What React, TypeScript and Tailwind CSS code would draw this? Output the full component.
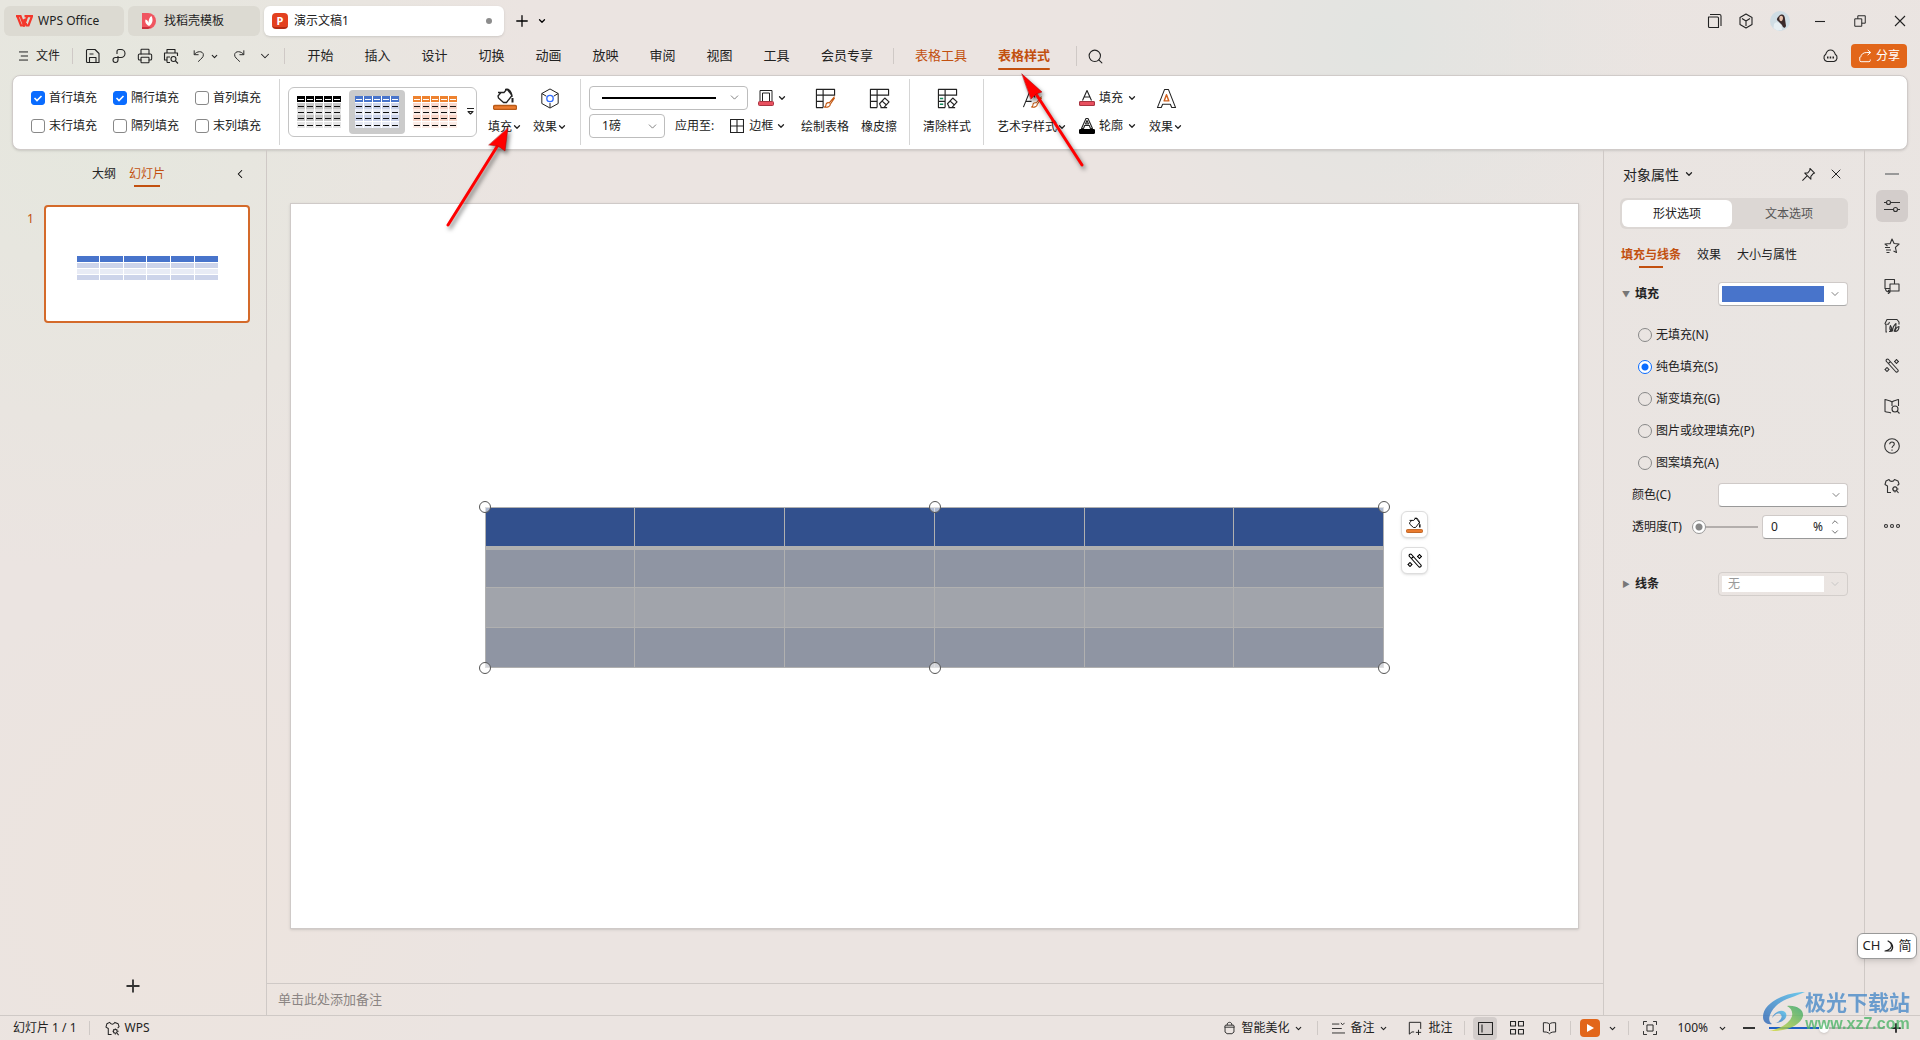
import React from "react";
import { ChevronDown, ChevronLeft, Plus, Printer, Search, X } from "lucide-react";

const font = "font-['Noto_Sans','Noto_Sans_CJK_SC',sans-serif]";

type IconProps = {
  d?: string;
  w?: number;
  h?: number;
  box?: string;
  sw?: number;
  className?: string;
  children?: React.ReactNode;
};

const Icon = ({
  d,
  w = 16,
  h = 16,
  box = "0 0 16 16",
  sw = 1.1,
  className = "",
  children,
}: IconProps) => (
  <svg
    width={w}
    height={h}
    viewBox={box}
    fill="none"
    stroke="currentColor"
    strokeWidth={sw}
    strokeLinejoin="round"
    className={`shrink-0 ${className}`}
    aria-hidden="true"
  >
    {d && <path d={d} />}
    {children}
  </svg>
);

const paths = {
  save: "M1.5 2.5v11a1 1 0 0 0 1 1H14V5.5l-4-4H2.5a1 1 0 0 0-1 1zM4.5 14V9.5H11V14M4.5 6h4",
  loop: "M6 6V3.500a2 2 0 0 1 2-2h2a4 4 0 0 1 0 8H4.5a2.5 2.5 0 1 0 2.5 2.5V8",
  undo: "M2.5 1.500v5h5M2.7 6.3C5 2.5 12.500 1.5 13 6.5c.2 3-2.5 4.5-6 8",
  redo: "M13.5 1.5v5h-5M13.3 6.3C11 2.5 3.5 1.5 3 6.5c-.2 3 2.5 4.5 6 8",
  windows: "M2.500 4h9a1 1 0 0 1 1 1v9.500h-9a1 1 0 0 1-1-1zM4 1.500h9.500a1.500 1.500 0 0 1 1.500 1.500v10",
  cube: "M8 1l6 3.500v7L8 15l-6-3.500v-7zM4 5.500L8 8l4-2.500M8 8v5",
  restore: "M2 5.500h8V14H2zM5.500 5.500V2H14v8.500h-4",
  cloud: "M4.500 13.500a4 4 0 0 1-1.300-7.200C4 3.500 5.500 2 8 2s4 1.500 4.800 4.300a4 4 0 0 1-1.300 7.200z",
  share: "M2 9v4a1.500 1.500 0 0 0 1.500 1.500h9A1.500 1.500 0 0 0 14 13v-1M3 9.500C3.500 6 6 4 10 4h4M11 1l3.500 3L11 7",
  pin: "M9.500 1.500l5 5-1.500.5-2.500 3v3L4 6.500h3l2.500-3zM6.500 9.500l-5 5",
  star: "M6 6L8 1l2.100 4.500 5 .5-3.700 3.400 1.100 5.100L9.500 13M6 5.500L1 6l2.500 2M1 9.500h5M2 12h5M2.500 14.500h3",
  layers: "M5.500 10.500H1v-9h9.500v4M6 6h9v7H6zM1.500 10.500c0 2 1 3.500 4 3.500M4 12l2 2-2 2",
  leaf: "M3 14H2V7L1 5.500l2-4h10L15 4v2.500M2.500 6C5 7 5 5 5.500 4M5 13.500h2c-2-3-1-5-.5-6C8 9.500 8 12 7.500 13.500M8.500 13.500c0-4 1-6 3.500-8 .5 3.500-1 6-2 8M11 13.500c.5-3 2-4.500 4-5 0 3-1.500 5-4 5z",
  book: "M8 4C6 2 3.500 2.500 1 1.500v12c2.500 1 4 .5 6 1.500M8 4c2-2 4-1.500 6.500-2.500V8M8 4v4",
  shirt: "M4 14.500h-.5V8L1 6.500 2 3l3-1.500C6 4 9.500 4 10.500 1.500L14 3l1 3-1.500 1.500M4 14.500h3",
};

const Caret = ({ size = 10, className = "" }: { size?: number; className?: string }) => (
  <ChevronDown size={size} strokeWidth={3} className={`shrink-0 ${className}`} />
);

const Divider = ({ className = "" }: { className?: string }) => (
  <span className={`w-px shrink-0 bg-[#cfc9c6] ${className}`} />
);

const MagicIcon = ({ size = 16 }: { size?: number }) => (
  <Icon w={size} h={size}>
    <path d="M2.500 3.500a1.400 1.400 0 0 1 2-2L14 12a1.500 1.500 0 0 1-2 2zM4.500 5.500l2-2" />
    <circle cx="12.500" cy="3.500" r="1.500" />
    <circle cx="3" cy="11.500" r="1.500" />
    <path d="M12.500 1v1M12.500 5v1M10 3.500h1M14 3.500h1M3 9v1M3 13v1M.5 11.500h1M4.500 11.500h1" />
  </Icon>
);

const BucketIcon = ({ w = 24, h = 22 }: { w?: number; h?: number }) => (
  <Icon w={w} h={h} box="0 0 24 22" sw={1.3}>
    <path d="M5 4.500h6L14 1l5 6.500-5.500 7h-3L5.500 10l-.5-2 3-3.500M12 1.500h3.500C18 3.500 19 6 19 9" />
    <path d="M19.500 10v4.500" strokeWidth="2" />
    <rect x=".5" y="17.500" width="23" height="4" rx="1.500" fill="#ed7d31" stroke="#b85a17" />
  </Icon>
);

const FitShirt = ({ size = 16 }: { size?: number }) => (
  <Icon w={size} h={size} d={paths.shirt}>
    <circle cx="11" cy="11" r="2" />
    <path d="M11 8v1M11 13v1.500M8 11h1M13 11h1.500M9 9l.7.7M13 9l-.7.7M9 13l.7-.7M12.500 12.500l2 2.500" />
  </Icon>
);

const TitleBar = () => (
  <header className="flex h-[37px] items-center pt-[5px] pr-[13px] pl-1">
    <nav className="flex gap-1 text-[12px] text-[#222]">
      <button className="flex h-[30px] w-[120px] items-center gap-[5px] rounded-md bg-[#dcdad2] pl-3">
        <svg width="17" height="12" viewBox="0 0 17 12" fill="none" stroke="#f3372b" strokeWidth="2.2">
          <path d="M0 1.200h4.500L8 10.500 11 2M1.500 1.500L5 10.500h2L9 4.500M8.500 1.200H16L12.500 10.500h-2L8 4" />
        </svg>
        WPS Office
      </button>
      <button className="flex h-[30px] w-[132px] items-center gap-2 rounded-md bg-[#dcdad2] pl-3.5">
        <svg width="14" height="16" viewBox="0 0 14 16">
          <path d="M0 0h6a8 8 0 0 1 0 16H0z" fill="#f05560" />
          <path d="M0 14h9l-3 2H0z" fill="#c9303c" />
          <path d="M7 13C3 11 3 8 3.500 6.500c2 .5 3 2 3 3.500 0-3 1-6 3-7 2 4 1 8-2.500 10z" fill="#fff" />
        </svg>
        找稻壳模板
      </button>
      <button className="flex h-[30px] w-[240px] items-center gap-1.5 rounded-md bg-white pl-2 pr-3 shadow-sm">
        <span className="flex h-4 w-4 items-center justify-center rounded-sm border-b-2 border-[#b52b13] bg-[#e3401f] text-[11px] leading-none font-bold text-white">
          P
        </span>
        演示文稿1
        <span className="ml-auto h-1.5 w-1.5 rounded-full bg-[#8c8c8c]" />
      </button>
    </nav>
    <button aria-label="新建" className="ml-[9px]">
      <Plus size={18} strokeWidth={1.7} />
    </button>
    <button aria-label="标签列表" className="ml-1.5">
      <Caret />
    </button>
    <div className="ml-auto flex items-center text-[#222]">
      <button aria-label="窗口" className="mr-4">
        <Icon d={paths.windows} />
      </button>
      <button aria-label="应用" className="mr-4">
        <Icon d={paths.cube} />
      </button>
      <button aria-label="账户" className="mr-[25px]">
        <svg width="20" height="20" viewBox="0 0 20 20">
          <circle cx="10" cy="10" r="10" fill="#cfdde4" />
          <path d="M9 5c3-3 6-1 6 3l1 7c-1 3-3 2-4-1L8 10C6 9 7 7 9 5z" fill="#3a2a2a" />
          <path d="M9.500 6c1-2 3.500-1.500 3.500 1s-1.500 3.500-2.500 3-1.500-2.500-1-4z" fill="#e8c3ae" />
          <path d="M4 13c2-3 6-2 7.500 2l.5 4-5 .5-3.500-2.500z" fill="#e6eff3" />
        </svg>
      </button>
      <button aria-label="最小化" className="mr-7">
        <Icon w={10} h={16} box="0 0 10 16" d="M0 8.500h10" />
      </button>
      <button aria-label="还原" className="mr-[26px]">
        <Icon w={14} h={14} d={paths.restore} />
      </button>
      <button aria-label="关闭">
        <Icon w={14} h={14} box="0 0 14 14" d="M2 2l10 10M12 2L2 12" />
      </button>
    </div>
  </header>
);

const menus = ["开始", "插入", "设计", "切换", "动画", "放映", "审阅", "视图", "工具"];

const MenuBar = () => (
  <div className="flex h-[38px] items-center pr-[13px] pl-[19px] text-[13px] text-[#222]">
    <button className="flex items-center gap-2 text-[12px]">
      <Icon w={9} h={12} box="0 0 10 12" d="M0 1.500h10M2 6h8M0 10.500h10" />
      文件
    </button>
    <Divider className="ml-3 h-4" />
    <div className="ml-3 flex items-center gap-2.5">
      <button aria-label="保存">
        <Icon d={paths.save} />
      </button>
      <button aria-label="输出为PDF">
        <Icon d={paths.loop} />
      </button>
      <button aria-label="打印">
        <Printer size={16} strokeWidth={1.6} />
      </button>
      <button aria-label="打印预览">
        <Icon d="M4 5V1.500h8V5M4 12H1.500V5h13v3M4 14.500V9h3M4 14.500h3">
          <circle cx="10.500" cy="11" r="2.500" />
          <path d="M12.500 13l2.500 2.500" />
        </Icon>
      </button>
      <button aria-label="撤销" className="ml-[3px] flex items-center gap-1">
        <Icon w={14} h={14} d={paths.undo} />
        <Caret size={9} />
      </button>
      <button aria-label="恢复" className="ml-[3px]">
        <Icon w={14} h={14} d={paths.redo} />
      </button>
      <button aria-label="更多" className="ml-0.5">
        <ChevronDown size={14} strokeWidth={1.8} />
      </button>
    </div>
    <Divider className="ml-3 h-4" />
    <nav className="ml-[7px] flex items-center">
      {menus.map((m) => (
        <button key={m} className="w-[57px]">
          {m}
        </button>
      ))}
      <button className="w-[84px]">会员专享</button>
      <Divider className="ml-1 h-4" />
      <button className="ml-[21px] text-[#c2500f]">表格工具</button>
      <button className="relative ml-[31px] font-bold text-[#c2500f]">
        表格样式
        <span className="absolute inset-x-0 -bottom-1 h-0.5 rounded bg-[#c2500f]" />
      </button>
    </nav>
    <Divider className="ml-[26px] h-5" />
    <button aria-label="搜索" className="ml-2.5">
      <Search size={17} strokeWidth={1.5} />
    </button>
    <button aria-label="云同步" className="ml-auto">
      <Icon w={17} h={16} d={paths.cloud}>
        <path d="M4.500 9.500H6M7.200 9.500h1.500M10 9.500h1.500" strokeWidth="1.8" />
      </Icon>
    </button>
    <button className="ml-3 flex h-6 w-14 items-center justify-center gap-1 rounded bg-[#e2661a] text-[12px] text-white">
      <Icon w={14} h={14} d={paths.share} />
      分享
    </button>
  </div>
);

const checks = [
  ["首行填充", true],
  ["隔行填充", true],
  ["首列填充", false],
  ["末行填充", false],
  ["隔列填充", false],
  ["末列填充", false],
] as const;

const CheckItem = ({ label, on }: { label: string; on: boolean }) => (
  <label className="flex h-5 items-center gap-1">
    <span className="relative h-3.5 w-3.5">
      <input
        type="checkbox"
        defaultChecked={on}
        className="peer block h-3.5 w-3.5 appearance-none rounded-[3px] border border-[#888] bg-white checked:border-[#0a6cff] checked:bg-[#0a6cff]"
      />
      <svg
        viewBox="0 0 14 14"
        fill="none"
        stroke="#fff"
        strokeWidth="1.6"
        className="pointer-events-none absolute inset-0 hidden peer-checked:block"
      >
        <path d="M3.500 7L6 9.500 10.500 5" />
      </svg>
    </span>
    {label}
  </label>
);

const styleRows = [0, 7, 13, 19, 26];

const TableStyle = ({ head, dark, light }: { head: string; dark: string; light: string }) => (
  <svg width="44" height="32" viewBox="0 0 44 32" shapeRendering="crispEdges" aria-hidden="true">
    <rect width="44" height="32" fill="#fff" />
    {styleRows.map((y, r) =>
      [0, 9, 18, 27, 36].map((x) => (
        <g key={`${x}-${y}`}>
          <rect x={x} y={y} width="8" height="6" fill={r === 0 ? head : r % 2 ? dark : light} />
          <rect x={x + 1} y={y + 3} width="6" height="1" fill={r === 0 ? "#fff" : "#111"} />
        </g>
      ))
    )}
  </svg>
);

const BigButton = ({ icon, label, caret }: { icon: React.ReactNode; label: string; caret?: boolean }) => (
  <button className="flex h-[50px] shrink-0 flex-col items-center justify-between">
    <span className="flex h-6 items-center">{icon}</span>
    <span className="flex items-center leading-5 whitespace-nowrap">
      {label}
      {caret && <Caret />}
    </span>
  </button>
);

const Grid = ({ children }: { children?: React.ReactNode }) => (
  <Icon w={21} h={21} box="0 0 22 22" sw={1.2}>
    <path d="M8.500 20.500h-7v-19h19V8M1.500 7.500h19M1.500 14h7M8.500 1.500v19" />
    {children}
  </Icon>
);

const Eraser = () => <path d="M11 16.500l5.500-6 4.500 4-5.500 6H13zM13.500 13.500l4.500 4M12 20.500h7" />;

const Brush = () => (
  <path
    stroke="#c2560f"
    d="M20.500 9l-6 7M14.500 15.500c-2-.5-3 1-3 2s-.5 2-1.500 2.500c3 .5 6-.5 6-3l4.500-6.500"
  />
);

const RibbonDivider = () => <span className="h-[66px] w-px shrink-0 bg-[#d5d5d5]" />;

const Ribbon = () => (
  <section className="mx-3 flex h-[75px] items-center rounded-lg border border-[#d0cbc9] bg-white pb-0.5 pl-[18px] text-[12px] text-[#222] shadow">
    <div className="grid grid-cols-[repeat(3,82px)] gap-y-2">
      {checks.map(([label, on]) => (
        <CheckItem key={label} label={label} on={on} />
      ))}
    </div>
    <span className="w-0.5" />
    <RibbonDivider />
    <div className="ml-2 flex h-[50px] w-[189px] shrink-0 items-center rounded-md border border-[#c4c4c4] pl-0.5">
      <button aria-label="黑色样式" className="flex h-11 w-14 items-center justify-center">
        <TableStyle head="#000" dark="#c9c9c9" light="#e6e6e6" />
      </button>
      <button
        aria-label="蓝色样式"
        className="ml-0.5 flex h-11 w-14 items-center justify-center rounded bg-[#cbcbcb]"
      >
        <TableStyle head="#4874cb" dark="#cdd4ea" light="#e8ebf5" />
      </button>
      <button aria-label="橙色样式" className="ml-0.5 flex h-11 w-14 items-center justify-center">
        <TableStyle head="#ee822f" dark="#f9d6c9" light="#fcece6" />
      </button>
      <button aria-label="更多样式" className="ml-[3px]">
        <Icon w={9} h={9} box="0 0 9 9" d="M1 1.500h7M2 4.500L4.500 7 7 4.500z" />
      </button>
    </div>
    <div className="ml-[11px] flex gap-[11px]">
      <BigButton icon={<BucketIcon />} label="填充" caret />
      <BigButton
        label="效果"
        caret
        icon={
          <Icon w={20} h={23} box="0 0 22 24">
            <path d="M11 1.500l9 5v11l-9 5-9-5v-11zM2 6.500l5 3M20 6.500l-5 3M11 17v5" />
            <circle cx="11" cy="12" r="3.500" stroke="#2f6bff" strokeWidth="1.5" />
          </Icon>
        }
      />
    </div>
    <span className="w-[13px]" />
    <RibbonDivider />
    <div className="ml-2 flex flex-col gap-1">
      <div className="flex items-center">
        <button
          aria-label="线型"
          className="flex h-6 w-[159px] items-center rounded border border-[#bdbdbd] pr-1.5 pl-3"
        >
          <span className="h-0.5 flex-1 bg-black" />
          <ChevronDown size={13} strokeWidth={1.5} className="ml-3 text-[#666]" />
        </button>
        <button aria-label="笔颜色" className="ml-2.5 flex items-center gap-[3px]">
          <Icon w={16} h={18} box="0 0 16 18" sw={1}>
            <path d="M2 12V1.500h12V12M4.500 12V4h7v8" />
            <rect x=".5" y="12.500" width="15" height="4" rx="1" fill="#e8505f" stroke="#a83440" />
          </Icon>
          <Caret />
        </button>
      </div>
      <div className="flex items-center">
        <span className="relative">
          <select
            aria-label="线宽"
            className="h-6 w-[76px] appearance-none rounded border border-[#bdbdbd] bg-white pl-3"
          >
            <option>1磅</option>
          </select>
          <ChevronDown
            size={13}
            strokeWidth={1.5}
            className="pointer-events-none absolute top-1.5 right-1.5 text-[#666]"
          />
        </span>
        <span className="ml-2.5">应用至:</span>
        <button className="ml-4 flex items-center">
          <Icon w={14} h={14} box="0 0 14 14" d="M.5.500h13v13H.5zM7 .5v13M.5 7h13" className="mr-[5px]" />
          边框
          <Caret className="ml-[3px]" />
        </button>
      </div>
    </div>
    <div className="ml-3.5 flex gap-3">
      <BigButton label="绘制表格" icon={<Grid><Brush /></Grid>} />
      <BigButton label="橡皮擦" icon={<Grid><Eraser /></Grid>} />
    </div>
    <span className="w-3" />
    <RibbonDivider />
    <div className="mr-3 ml-[13px]">
      <BigButton
        label="清除样式"
        icon={
          <Grid>
            <path stroke="#138a5e" strokeWidth="1.6" d="M3 11h3.500M3 17h3.500" />
            <Eraser />
          </Grid>
        }
      />
    </div>
    <RibbonDivider />
    <div className="ml-[13px] flex items-center gap-3">
      <BigButton
        label="艺术字样式"
        caret
        icon={
          <Icon w={21} h={21} box="0 0 22 22">
            <path d="M1.500 20L9 1.500h1L13.500 10M4 14h6" />
            <Brush />
          </Icon>
        }
      />
      <div className="flex flex-col gap-2">
        <button className="flex items-center gap-1 leading-5">
          <Icon w={16} h={18} box="0 0 16 18">
            <path d="M3.500 11.500L8 1.500l4.500 10M5 8h6" />
            <rect x=".5" y="12.500" width="15" height="4" rx="1" fill="#e8505f" stroke="#a83440" />
          </Icon>
          填充
          <Caret />
        </button>
        <button className="flex items-center gap-1 leading-5">
          <Icon w={16} h={18} box="0 0 16 18">
            <path d="M2.500 11.500L7 1.500h2l4.500 10h-2l-1.200-3H5.700l-1.200 3zM6.500 7h3L8 3.500z" />
            <rect x=".5" y="12.500" width="15" height="4" rx="1" fill="#000" stroke="#000" />
          </Icon>
          轮廓
          <Caret />
        </button>
      </div>
      <BigButton
        label="效果"
        caret
        icon={
          <Icon w={21} h={21} box="0 0 22 22">
            <path d="M1.500 20.500L9 1.500h4l7.500 19h-4L15 17H7l-1.500 3.500z" />
            <path d="M8.500 13.500h5L11 7z" stroke="#d0601c" strokeWidth="1.5" />
          </Icon>
        }
      />
    </div>
  </section>
);

const rows = [0, 1, 2, 3];
const cols = [0, 1, 2, 3, 4, 5];

const SlideList = () => (
  <aside className="flex w-[267px] shrink-0 flex-col border-r border-[#cfc9c6] text-[12px]">
    <div className="flex h-12 items-center pr-[19px] pl-[92px]">
      <button className="text-[#222]">大纲</button>
      <button className="relative ml-[13px] text-[#c2500f]">
        幻灯片
        <span className="absolute inset-x-[5px] -bottom-1 h-0.5 bg-[#c2500f]" />
      </button>
      <button aria-label="收起" className="ml-auto">
        <ChevronLeft size={14} strokeWidth={1.8} />
      </button>
    </div>
    <div className="mt-[7px] flex pl-[27px]">
      <span className="mt-[5px] w-[17px] text-[#c2500f]">1</span>
      <div className="flex h-[118px] w-[206px] items-center justify-center rounded border-2 border-[#d46a2a] bg-white">
        <table className="mt-2 w-[143px] table-fixed border-separate border-spacing-px">
          <tbody>
            {rows.map((r) => (
              <tr
                key={r}
                className={r === 0 ? "h-1.5 bg-[#4874cb]" : "h-[5px] odd:bg-[#e8ebf5] even:bg-[#cdd4ea]"}
              >
                {cols.map((c) => (
                  <td key={c} className="p-0" />
                ))}
              </tr>
            ))}
          </tbody>
        </table>
      </div>
    </div>
    <button aria-label="新建幻灯片" className="mx-auto mt-auto mb-[19px]">
      <Plus size={20} strokeWidth={2.2} className="text-[#333]" />
    </button>
  </aside>
);

const Handle = ({ pos }: { pos: string }) => (
  <span
    className={`absolute h-3 w-3 -translate-x-1/2 -translate-y-1/2 rounded-full border border-[#555] bg-white/60 ${pos}`}
  />
);

const rowColors = ["bg-[#32508d]", "bg-[#8f95a3]", "bg-[#a1a4ab]", "bg-[#8f95a3]"];

const FloatButton = ({ label, children }: { label: string; children: React.ReactNode }) => (
  <button
    aria-label={label}
    className="flex h-[27px] w-[27px] items-center justify-center rounded-md border border-[#ddd] bg-white shadow"
  >
    {children}
  </button>
);

const Editor = () => (
  <main className="flex min-w-0 flex-1 flex-col">
    <div className="mt-[53px] mr-6 mb-[54px] ml-[23px] flex-1 border border-[#cfcac8] bg-white px-[14.5%] pt-[303px] shadow-sm">
      <div className="relative">
        <table className="w-full table-fixed border-collapse border border-[#b0b0b0]">
          <tbody>
            {rows.map((r) => (
              <tr
                key={r}
                className={`h-10 border-[#b0b0b0] ${rowColors[r]} ${r === 0 ? "border-b-4" : "border-b"}`}
              >
                {cols.map((c) => (
                  <td key={c} className="border-x border-[#b0b0b0] p-0" />
                ))}
              </tr>
            ))}
          </tbody>
        </table>
        <Handle pos="left-0 top-0" />
        <Handle pos="left-1/2 top-0" />
        <Handle pos="left-full top-0" />
        <Handle pos="left-0 top-full" />
        <Handle pos="left-1/2 top-full" />
        <Handle pos="left-full top-full" />
        <div className="absolute top-1 left-full ml-[17px] flex flex-col gap-[9px]">
          <FloatButton label="填充">
            <BucketIcon w={17} h={16} />
          </FloatButton>
          <FloatButton label="智能美化">
            <MagicIcon size={16} />
          </FloatButton>
        </div>
      </div>
    </div>
    <label className="flex h-8 items-center border-t border-[#cfc9c6] pl-[11px]">
      <input
        aria-label="备注"
        placeholder="单击此处添加备注"
        className="w-full bg-transparent text-[13px] placeholder:text-[#8b8583]"
      />
    </label>
  </main>
);

const fills = ["无填充(N)", "纯色填充(S)", "渐变填充(G)", "图片或纹理填充(P)", "图案填充(A)"];

const Properties = () => (
  <aside className="flex w-[262px] shrink-0 flex-col border-x border-[#cfc9c6] px-4 text-[12px] text-[#222]">
    <div className="flex h-12 items-center pr-1 pl-[3px]">
      <h2 className="text-[14px]">对象属性</h2>
      <Caret className="ml-[5px]" />
      <button aria-label="固定" className="ml-auto">
        <Icon w={15} h={15} d={paths.pin} />
      </button>
      <button aria-label="关闭" className="ml-3">
        <X size={16} strokeWidth={1.5} />
      </button>
    </div>
    <div className="flex h-[31px] rounded-md bg-[#dcd7d4] p-0.5">
      <button className="w-[110px] rounded-md bg-white">形状选项</button>
      <button className="flex-1 text-[#555]">文本选项</button>
    </div>
    <div className="mt-3.5 flex h-6 items-center gap-4 pl-px">
      <button className="relative font-bold text-[#c2500f]">
        填充与线条
        <span className="absolute inset-x-[18px] -bottom-1 h-0.5 bg-[#c2500f]" />
      </button>
      <button>效果</button>
      <button>大小与属性</button>
    </div>
    <div className="mt-[15px] flex items-center">
      <button className="flex items-center gap-[3px] font-bold">
        <span className="w-3 text-center text-[8px] text-[#777]">▼</span>
        填充
      </button>
      <button
        aria-label="填充颜色"
        className="ml-auto flex h-6 w-[130px] items-center rounded border border-[#cfcac8] border-b-[#aaa] bg-white pr-1.5 pl-[3px]"
      >
        <span className="h-4 w-[102px] bg-[#4874cb]" />
        <ChevronDown size={12} strokeWidth={1.5} className="ml-auto text-[#555]" />
      </button>
    </div>
    <fieldset className="mt-[13px] pl-[18px]">
      {fills.map((f) => (
        <label key={f} className="flex h-8 items-center gap-1">
          <input
            type="radio"
            name="fill"
            defaultChecked={f === "纯色填充(S)"}
            className="h-3.5 w-3.5 appearance-none rounded-full border border-[#888] checked:border-[#0a6cff] checked:bg-[radial-gradient(circle,#0a6cff_3px,white_4px)]"
          />
          {f}
        </label>
      ))}
    </fieldset>
    <div className="flex h-8 items-center pl-3">
      <label htmlFor="color">颜色(C)</label>
      <span className="relative ml-auto">
        <select
          id="color"
          className="block h-6 w-[130px] appearance-none rounded border border-[#cfcac8] border-b-[#999] bg-white"
        />
        <ChevronDown
          size={12}
          strokeWidth={1.5}
          className="pointer-events-none absolute top-1.5 right-1.5 text-[#555]"
        />
      </span>
    </div>
    <div className="flex h-8 items-center pl-3">
      <label htmlFor="alpha">透明度(T)</label>
      <input
        id="alpha"
        type="range"
        defaultValue={0}
        className="ml-auto h-3.5 w-[66px] appearance-none bg-[linear-gradient(#b3aeac,#b3aeac)] bg-[length:100%_2px] bg-center bg-no-repeat [&::-webkit-slider-thumb]:h-3.5 [&::-webkit-slider-thumb]:w-3.5 [&::-webkit-slider-thumb]:appearance-none [&::-webkit-slider-thumb]:rounded-full [&::-webkit-slider-thumb]:border [&::-webkit-slider-thumb]:border-[#999] [&::-webkit-slider-thumb]:bg-[radial-gradient(circle,#888_3px,white_4px)]"
      />
      <span className="ml-1 flex h-6 w-[86px] items-center rounded border border-[#cfcac8] border-b-[#999] bg-white pl-2">
        <input aria-label="透明度" defaultValue="0" className="w-8 min-w-0 flex-1" />%
        <span className="mx-[7px] flex flex-col text-[#555]">
          <button aria-label="增加">
            <ChevronDown size={10} strokeWidth={2} className="rotate-180" />
          </button>
          <button aria-label="减少">
            <ChevronDown size={10} strokeWidth={2} />
          </button>
        </span>
      </span>
    </div>
    <div className="mt-[29px] flex items-center">
      <button className="flex items-center gap-[3px] font-bold">
        <span className="w-3 text-center text-[8px] text-[#777]">▶</span>
        线条
      </button>
      <button
        disabled
        aria-label="线条类型"
        className="ml-auto flex h-6 w-[130px] items-center rounded border border-[#d3cecb] pr-1.5 pl-[3px]"
      >
        <span className="h-4 w-[102px] bg-white pl-1.5 text-left leading-4 text-[#999]">无</span>
        <ChevronDown size={12} strokeWidth={1.5} className="ml-auto text-[#bbb]" />
      </button>
    </div>
  </aside>
);

const sideIcons: [string, React.ReactNode][] = [
  [
    "属性",
    <Icon>
      <path d="M0 4.500h2.500M6.500 4.500H16M0 11.500h9.500M13.500 11.500H16" />
      <circle cx="4.500" cy="4.500" r="2" />
      <circle cx="11.500" cy="11.500" r="2" />
    </Icon>,
  ],
  ["动画", <Icon d={paths.star} />],
  ["切换", <Icon d={paths.layers} />],
  ["素材", <Icon d={paths.leaf} />],
  ["美化", <MagicIcon />],
  [
    "查找",
    <Icon d={paths.book}>
      <circle cx="11" cy="11" r="3" />
      <path d="M13.200 13.200l2.300 2.300" />
    </Icon>,
  ],
  [
    "帮助",
    <Icon>
      <circle cx="8" cy="8" r="7.300" />
      <path d="M5.700 6.300c0-3.200 4.600-3 4.600-.3C10.300 8 8 7.800 8 10M8 11.500v1.200" />
    </Icon>,
  ],
  ["皮肤", <FitShirt />],
  [
    "更多",
    <Icon>
      <circle cx="2" cy="8" r="1.500" />
      <circle cx="8" cy="8" r="1.500" />
      <circle cx="14" cy="8" r="1.500" />
    </Icon>,
  ],
];

const SideBar = () => (
  <aside className="flex w-[55px] shrink-0 flex-col items-center gap-2 pt-[23px] pr-px text-[#333]">
    <span className="mb-[7px] h-0.5 w-3.5 shrink-0 bg-[#999]" />
    {sideIcons.map(([name, icon], i) => (
      <button
        key={name}
        aria-label={name}
        className={`flex h-8 w-8 items-center justify-center rounded-md ${i === 0 ? "bg-[#d3cdcb]" : ""}`}
      >
        {icon}
      </button>
    ))}
  </aside>
);

const StatusBar = () => (
  <footer className="flex h-[25px] items-center border-t border-[#cfc9c6] pr-[17px] pl-[13px] text-[12px] text-[#222]">
    <span>幻灯片 1 / 1</span>
    <Divider className="ml-3 h-3.5" />
    <button className="ml-[15px] flex items-center gap-[5px]">
      <FitShirt size={15} />
      WPS
    </button>
    <div className="ml-auto flex items-center">
      <button className="flex items-center gap-[5px]">
        <Icon w={13} h={14} d="M3 4.500h10L14 7H2zM2.500 7v6L5 15h6l2.500-2V7M5 4.500C5 2 6.500 1 8 1s3 1 3 3.500" />
        智能美化
        <Caret size={9} />
      </button>
      <Divider className="ml-3.5 h-3.5" />
      <button className="ml-3.5 flex items-center gap-[5px]">
        <Icon w={13} h={13} d="M0 2.500h9M0 8h12M0 13.500h16M11 1l2 2.500L15.500 1" />
        备注
        <Caret size={9} />
      </button>
      <button className="ml-5 flex items-center gap-1.5">
        <Icon w={14} h={14} d="M7 12.500H4.500L1.500 15V1.500h13V9M12 10v6M9 13h6" />
        批注
      </button>
      <Divider className="ml-3 h-3.5" />
      <button
        aria-label="普通视图"
        className="ml-2 flex h-[23px] w-6 items-center justify-center rounded bg-[#d3cdcb]"
      >
        <Icon w={15} h={13} box="0 0 15 13" d="M.5.500h14v12H.5zM4 2.500v8" />
      </button>
      <button aria-label="幻灯片浏览" className="ml-[13px]">
        <Icon w={14} h={14} box="0 0 14 14" d="M.5.500h5V5h-5zM8.500.5h5V5h-5zM.5 8.500h5V13h-5zM8.500 8.500h5V13h-5z" />
      </button>
      <button aria-label="阅读视图" className="ml-[18px]">
        <Icon w={15} h={14} d="M8 3.500C6 1.500 3.500 2 1 2v10.500c2.500 0 5 0 7 2 2-2 4.500-2 7-2V2c-2.500 0-5-.5-7 1.500v8" />
      </button>
      <Divider className="ml-[13px] h-3.5" />
      <button
        aria-label="放映"
        className="ml-[9px] flex h-[18px] w-5 items-center justify-center rounded-sm bg-[#e2661a]"
      >
        <svg width="7" height="8" viewBox="0 0 7 8" fill="#fff">
          <path d="M0 0l7 4-7 4z" />
        </svg>
      </button>
      <Caret size={9} className="ml-2" />
      <Divider className="ml-[11px] h-3.5" />
      <button aria-label="适应窗口" className="ml-3.5">
        <Icon w={14} h={14} d="M.5 4.500v-4h4M11.500.5h4v4M15.500 11.500v4h-4M4.500 15.500h-4v-4M4.500 4.500h7v7h-7z" />
      </button>
      <button className="ml-5 flex items-center gap-2.5">
        100%
        <Caret size={9} />
      </button>
      <button aria-label="缩小" className="ml-4 h-0.5 w-3 bg-[#333]" />
      <input
        aria-label="缩放"
        type="range"
        defaultValue={47}
        className="ml-3.5 h-2.5 w-[116px] appearance-none bg-[linear-gradient(90deg,#1f5fc4_48%,#b9b4b2_48%)] bg-[length:100%_2px] bg-center bg-no-repeat [&::-webkit-slider-thumb]:h-2.5 [&::-webkit-slider-thumb]:w-2.5 [&::-webkit-slider-thumb]:appearance-none [&::-webkit-slider-thumb]:rounded-full [&::-webkit-slider-thumb]:bg-white [&::-webkit-slider-thumb]:shadow"
      />
      <button aria-label="放大" className="ml-1">
        <Plus size={14} strokeWidth={3} />
      </button>
    </div>
  </footer>
);

// red pointers over 表格样式 and 填充
const Arrows = () => (
  <svg
    width="680"
    height="180"
    viewBox="420 60 680 180"
    className="pointer-events-none absolute top-[60px] left-[420px] drop-shadow-[2px_3px_2px_rgba(0,0,0,0.5)]"
  >
    <g fill="#f00" strokeLinecap="round">
      <path d="M1036 94L1082 165" strokeWidth="3" stroke="#f00" />
      <path d="M1022 74l20 18-6 2-5 5z" stroke="#a00" strokeWidth=".5" />
      <path d="M498 145l-50 80" strokeWidth="3" stroke="#f00" />
      <path d="M508 128l-3 23-7-5-9-1z" stroke="#a00" strokeWidth=".5" />
    </g>
  </svg>
);

const Watermark = () => (
  <div className="pointer-events-none absolute right-2.5 bottom-1.5 flex items-center opacity-80">
    <svg width="42" height="40" viewBox="0 0 42 40">
      <defs>
        <linearGradient id="wave" x1="0" y1="1" x2="1" y2="0">
          <stop offset="0" stopColor="#2b62b4" />
          <stop offset="1" stopColor="#4fc3f0" />
        </linearGradient>
        <linearGradient id="land" x1="0" y1="1" x2="1" y2="0">
          <stop offset="0" stopColor="#d9dc3a" />
          <stop offset="1" stopColor="#2fa66a" />
        </linearGradient>
      </defs>
      <path d="M42 0C24 0 0 10 0 25c0 5 4 8 9 7-5-3-3-11 4-18C20 7 31 5 42 0z" fill="url(#wave)" />
      <path d="M9 26c2-6 9-9 13-6 4 4-1 11-10 11 5-1 8-6 6-8-2-3-6-1-9 3z" fill="url(#wave)" />
      <path d="M24 14c10-1 17 4 16 10-2 9-17 16-34 15 11-2 21-8 23-15 1-4-1-8-5-10z" fill="url(#land)" />
    </svg>
    <div className="flex flex-col items-center">
      <span className="text-[21px] leading-6 font-bold text-[#4a8bc9]">极光下载站</span>
      <span className="font-['Liberation_Sans',sans-serif] text-[16px] leading-5 font-bold text-[#4fb56a]">
        www.xz7.com
      </span>
    </div>
  </div>
);

const InputMethod = () => (
  <div className="absolute right-[3px] bottom-[81px] flex h-[26px] w-[60px] items-center justify-center gap-1 rounded-md border border-[#999] bg-white text-[13px] text-[#222] shadow-md">
    CH
    <Icon w={10} h={12} box="0 0 10 12" d="M4 1c5 3 5 8-3 10h6c3-3 2-8-3-10z" />
    简
  </div>
);

export default function App() {
  return (
    <div
      className={`${font} relative flex h-screen flex-col overflow-hidden bg-[#ebe4e1] bg-[radial-gradient(circle_at_5%_12%,#e5e7de_0%,transparent_22%),radial-gradient(circle_at_72%_4%,#e2e4e1_0%,transparent_16%),radial-gradient(circle_at_95%_30%,#e9e5e2_0%,transparent_25%),radial-gradient(circle_at_10%_85%,#ede4de_0%,transparent_16%)]`}
    >
      <TitleBar />
      <MenuBar />
      <Ribbon />
      <div className="flex min-h-0 flex-1">
        <SlideList />
        <Editor />
        <Properties />
        <SideBar />
      </div>
      <StatusBar />
      <Arrows />
      <InputMethod />
      <Watermark />
    </div>
  );
}
